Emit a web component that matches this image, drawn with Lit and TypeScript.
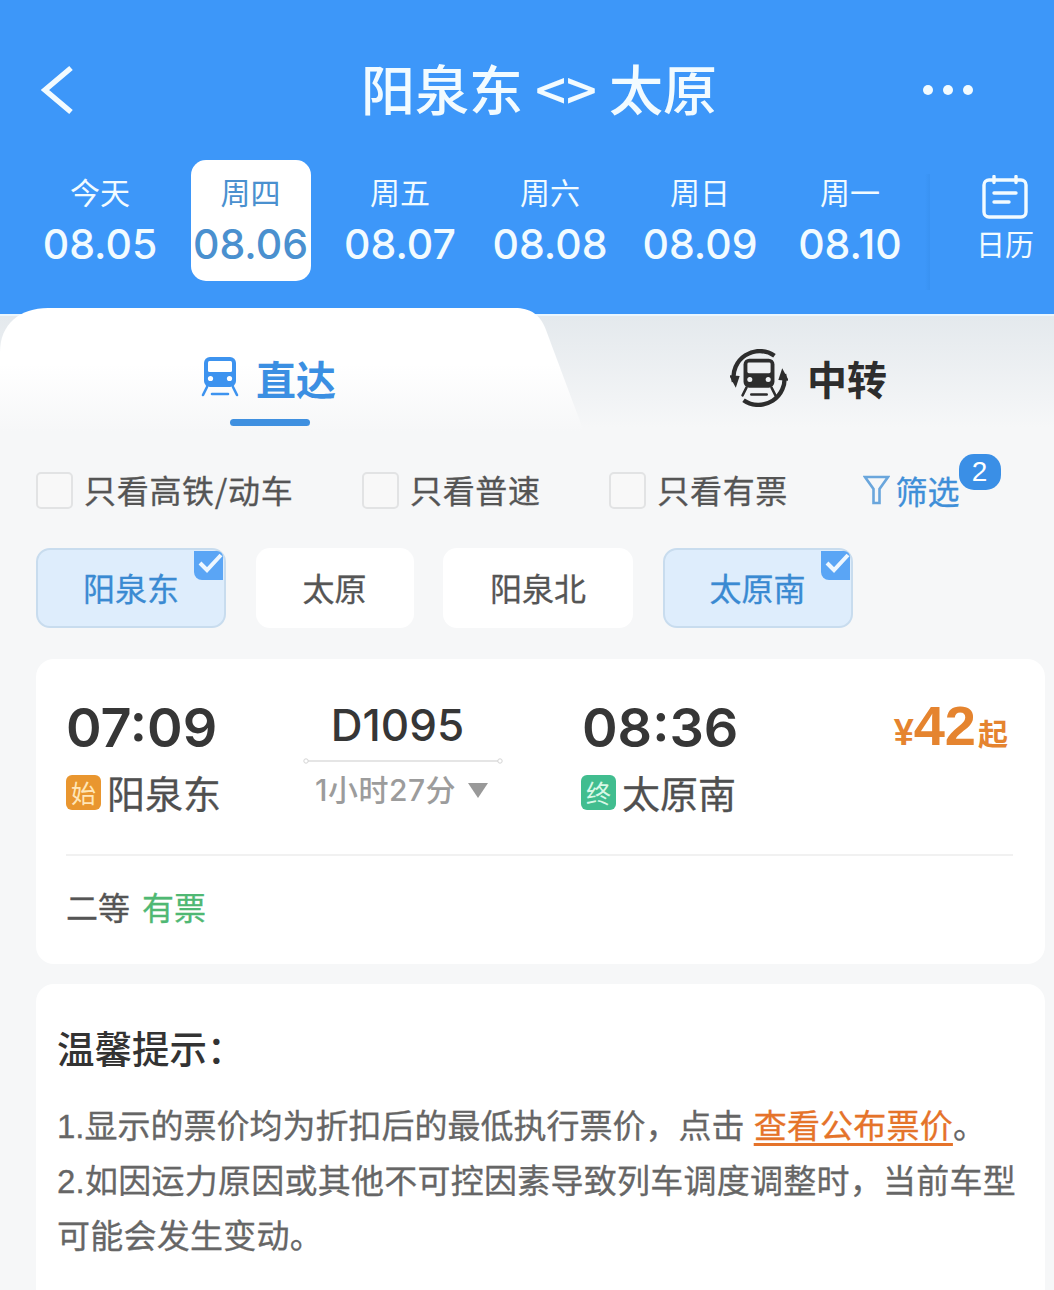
import { LitElement, html, css, svg } from "lit";
import { customElement } from "lit/decorators.js";

const dates = [
  { label: "今天", date: "08.05" },
  { label: "周四", date: "08.06", active: true },
  { label: "周五", date: "08.07" },
  { label: "周六", date: "08.08" },
  { label: "周日", date: "08.09" },
  { label: "周一", date: "08.10" },
];

const checks = ["只看高铁/动车", "只看普速", "只看有票"];

const stations = [
  { name: "阳泉东", on: true },
  { name: "太原" },
  { name: "阳泉北" },
  { name: "太原南", on: true },
];

// same train front is used on both tabs, only the colours differ
const train = (color: string, win: string) => svg`
  <rect x="14" y="9" width="32" height="30" rx="6" fill="${color}" />
  <rect x="18" y="13" width="24" height="11" rx="1.5" fill="${win}" />
  <circle cx="20.5" cy="30.5" r="2.6" fill="${win}" />
  <circle cx="39.5" cy="30.5" r="2.6" fill="${win}" />
  <path d="M17 39l-4 8M43 39l4 8M22 46h16" stroke="${color}" stroke-width="2.6" stroke-linecap="round" fill="none" />
`;

@customElement("app-root")
export class AppRoot extends LitElement {
  static styles = css`
    :host {
      display: block;
      width: 1054px;
      height: 1290px;
      overflow: hidden;
      background: #f6f7f8;
      font-family: "Liberation Sans", "Noto Sans CJK SC", sans-serif;
      color: #555;
    }

    /* header */
    .head {
      height: 314px;
      box-sizing: border-box;
      background: #3d97f9;
      color: #f2fbff;
      padding-top: 55px;
    }
    .nav {
      display: flex;
      align-items: center;
      justify-content: space-between;
      height: 70px;
      padding: 0 81px 0 40px;
    }
    .nav svg {
      display: block;
    }
    .title {
      font-family: "Noto Sans CJK SC", sans-serif;
      font-size: 54px;
      font-weight: 500;
      line-height: 70px;
      margin: -4px 0 0 81px;
      white-space: pre;
    }
    .days {
      display: flex;
      align-items: flex-start;
      margin-top: 35px;
      padding-left: 25px;
    }
    .day {
      width: 150px;
      height: 121px;
      display: flex;
      flex-direction: column;
      align-items: center;
      flex: none;
    }
    .day .lab {
      font-family: "Noto Sans CJK SC", sans-serif;
      font-size: 30px;
      line-height: 42px;
      margin-top: 10px;
    }
    .day .num {
      font-family: Inter, sans-serif;
      font-weight: 500;
      font-size: 41px;
      line-height: 48px;
      margin-top: 8px;
    }
    .day.on {
      width: 120px;
      margin: 0 14px 0 16px;
      background: #fff;
      border-radius: 15px;
      color: #4a90cf;
    }
    .day.on span {
      margin-right: 1px;
    }
    .cal {
      flex: none;
      width: 160px;
      height: 121px;
      position: relative;
      display: flex;
      flex-direction: column;
      align-items: center;
      padding-top: 15px;
      box-sizing: border-box;
    }
    .cal::before {
      content: "";
      position: absolute;
      left: 0;
      top: 14px;
      width: 5px;
      height: 116px;
      background: linear-gradient(90deg, #3d97f9, #3992f2);
    }
    .cal span {
      font-family: "Noto Sans CJK SC", sans-serif;
      font-size: 29px;
      line-height: 40px;
      margin-top: 4px;
    }

    /* tabs */
    .tabs {
      position: relative;
      height: 129px;
      display: grid;
      grid-template-columns: 540px 1fr;
      background: linear-gradient(#e4e9ed, #f6f7f8 88%);
      border-top: 2px solid #eaf6fe;
      box-sizing: border-box;
    }
    .tabshape {
      position: absolute;
      left: 0;
      top: -8px;
      display: block;
    }
    .tab {
      position: relative;
      display: flex;
      align-items: center;
      font-family: "Noto Sans CJK SC", sans-serif;
      font-size: 40px;
      font-weight: 700;
      height: 124px;
    }
    .tab.direct {
      color: #3b8fe2;
      padding-left: 190px;
    }
    .tab.direct svg {
      margin-right: 6px;
    }
    .tab.direct::after {
      content: "";
      position: absolute;
      left: 230px;
      top: 103px;
      width: 80px;
      height: 7px;
      border-radius: 4px;
      background: #3f90e0;
    }
    .tab.transfer {
      color: #2d2d2d;
      padding-left: 190px;
      gap: 19px;
    }

    /* filter row */
    .filters {
      display: flex;
      align-items: center;
      gap: 68.5px;
      padding: 0 36px;
      margin-top: 27px;
      height: 40px;
    }
    .chk {
      display: flex;
      align-items: center;
      gap: 11px;
      font-family: "Noto Sans CJK SC", sans-serif;
      font-size: 32px;
      letter-spacing: 0.7px;
      color: #555;
      white-space: nowrap;
      -webkit-text-stroke: 0.3px currentColor;
    }
    .chk span:last-child {
      margin-bottom: 3px;
    }
    .box {
      width: 37px;
      height: 37px;
      box-sizing: border-box;
      border: 2px solid #e2e3e4;
      border-radius: 5px;
      background: #f8f8f8;
    }
    .filter {
      position: relative;
      display: flex;
      align-items: center;
      gap: 6px;
      margin-left: 6px;
      font-family: "Noto Sans CJK SC", sans-serif;
      font-size: 32px;
      color: #3f8fd8;
      -webkit-text-stroke: 0.3px currentColor;
    }
    .badge {
      position: absolute;
      left: 96px;
      top: -13px;
      width: 42px;
      height: 36px;
      border-radius: 15px;
      background: #3a8fe6;
      color: #fff;
      font-family: "Liberation Sans", sans-serif;
      font-size: 28px;
      line-height: 36px;
      text-align: center;
      -webkit-text-stroke: 0;
    }

    /* station chips */
    .chips {
      display: flex;
      gap: 29.5px;
      padding: 0 36px;
      margin-top: 38px;
    }
    .chip {
      position: relative;
      height: 80px;
      padding: 0 47px 3px;
      box-sizing: border-box;
      display: flex;
      align-items: center;
      background: #fff;
      border-radius: 14px;
      font-family: "Noto Sans CJK SC", sans-serif;
      font-size: 32px;
      color: #555;
      -webkit-text-stroke: 0.3px currentColor;
    }
    .chip.on {
      background: #deedfc;
      border: 2px solid #c8dcee;
      color: #3a8ad2;
      padding: 0 45px 3px;
    }
    .tick {
      position: absolute;
      right: 1px;
      top: 1px;
      width: 29px;
      height: 29px;
      background: #5aa5f5;
      border-radius: 0 6px 0 8px;
      display: block;
    }

    /* cards */
    .card {
      margin: 31px 9px 0 36px;
      background: #fff;
      border-radius: 18px;
    }
    .ticket {
      height: 305px;
      box-sizing: border-box;
      padding: 0 32px 0 30px;
    }
    .route {
      display: grid;
      grid-template-columns: 210px 300px 1fr auto;
      height: 197px;
      border-bottom: 2px solid #f1f1f1;
      box-sizing: border-box;
    }
    .stop {
      display: flex;
      flex-direction: column;
      padding-top: 38px;
    }
    .time {
      font-family: Inter, sans-serif;
      font-weight: 600;
      font-size: 54px;
      line-height: 62px;
      color: #363636;
    }
    .place {
      display: flex;
      align-items: center;
      gap: 6px;
      font-family: "Noto Sans CJK SC", sans-serif;
      font-size: 38px;
      line-height: 50px;
      color: #505050;
      margin-top: 8px;
      -webkit-text-stroke: 0.3px currentColor;
    }
    .tag {
      width: 35px;
      height: 35px;
      border-radius: 6px;
      font-size: 25px;
      line-height: 35px;
      text-align: center;
      -webkit-text-stroke: 0;
    }
    .tag.start {
      background: #e9962f;
      color: #ffe6b8;
    }
    .tag.end {
      background: #41bd8f;
      color: #d8f8e6;
    }
    .arr {
      padding-left: 5px;
    }
    .arr .time {
      margin-left: 1px;
    }
    .mid {
      display: flex;
      flex-direction: column;
      align-items: center;
      width: 200px;
      margin-left: 27px;
      padding-top: 39px;
    }
    .code {
      font-family: Inter, sans-serif;
      font-weight: 500;
      font-size: 44px;
      line-height: 54px;
      color: #363636;
      margin-left: -11px;
    }
    .line {
      display: block;
      margin-top: 6px;
    }
    .dur {
      display: flex;
      align-items: center;
      gap: 12px;
      font-family: Inter, "Noto Sans CJK SC", sans-serif;
      font-size: 30px;
      font-weight: 500;
      line-height: 42px;
      letter-spacing: 0.5px;
      color: #9c9c9c;
      margin-top: 5px;
      margin-right: 3px;
    }
    .tri {
      width: 0;
      height: 0;
      border-left: 10px solid transparent;
      border-right: 10px solid transparent;
      border-top: 15px solid #999;
    }
    .price {
      display: flex;
      align-items: baseline;
      padding: 34px 5px 0 0;
      color: #e5842f;
      font-weight: 700;
      height: 60px;
    }
    .price .yen {
      font-size: 36px;
    }
    .price .big {
      font-size: 56px;
    }
    .price .qi {
      font-family: "Noto Sans CJK SC", sans-serif;
      font-size: 30px;
      margin-left: 2px;
    }
    .seat {
      display: flex;
      gap: 12px;
      margin-top: 25px;
      font-family: "Noto Sans CJK SC", sans-serif;
      font-size: 32px;
      line-height: 50px;
      color: #555;
      -webkit-text-stroke: 0.3px currentColor;
    }
    .seat em {
      font-style: normal;
      color: #4fb873;
    }
    .tips {
      margin-top: 20px;
      padding: 35px 20px 0 21px;
      height: 340px;
      box-sizing: border-box;
    }
    .tips h3 {
      margin: 0 0 24px;
      font-family: "Noto Sans CJK SC", sans-serif;
      font-size: 37.5px;
      font-weight: 500;
      line-height: 56px;
      color: #333;
    }
    .tips p {
      margin: 0;
      font-family: "Liberation Sans", "Noto Sans CJK SC", sans-serif;
      font-size: 33px;
      line-height: 55px;
      color: #666;
      -webkit-text-stroke: 0.3px currentColor;
    }
    .tips p.wide {
      letter-spacing: 0.25px;
    }
    .tips a {
      color: #e5732a;
      letter-spacing: 0.2px;
      text-decoration: underline;
      text-underline-offset: 5px;
    }
  `;

  render() {
    return html`
      <div class="head">
        <div class="nav">
          <svg width="34" height="50" viewBox="0 0 34 50">
            <path d="M31 3 5 25l26 22" fill="none" stroke="#f2fbff" stroke-width="5.5" />
          </svg>
          <div class="title">阳泉东 &lt;&gt; 太原</div>
          <svg width="50" height="12" viewBox="0 0 50 12" fill="#f2fbff">
            <circle cx="5" cy="6" r="5" />
            <circle cx="25" cy="6" r="5" />
            <circle cx="45" cy="6" r="5" />
          </svg>
        </div>
        <div class="days">
          ${dates.map(
            (d) => html`
              <div class="day ${d.active ? "on" : ""}">
                <span class="lab">${d.label}</span>
                <span class="num">${d.date}</span>
              </div>
            `
          )}
          <div class="cal">
            <svg width="46" height="44" viewBox="0 0 46 44" fill="none" stroke="#f2fbff" stroke-width="3.4" stroke-linecap="round">
              <rect x="2" y="5" width="42" height="37" rx="5" />
              <path d="M12 1.5v6M34 1.5v6M12 18h22M12 27h15" />
            </svg>
            <span>日历</span>
          </div>
        </div>
      </div>

      <div class="tabs">
        <svg class="tabshape" width="600" height="124" viewBox="0 0 600 124">
          <defs>
            <linearGradient id="fade" x1="0" y1="0" x2="0" y2="1">
              <stop offset="0.45" stop-color="#ffffff" />
              <stop offset="1" stop-color="#f6f7f8" />
            </linearGradient>
          </defs>
          <path d="M0 44C0 16 20 0 48 0H515C530 0 540 6 546 22L584 124H0Z" fill="url(#fade)" />
        </svg>
        <div class="tab direct">
          <svg width="60" height="60" viewBox="0 0 60 60">${train("#3d93ef", "#fff")}</svg>
          <span>直达</span>
        </div>
        <div class="tab transfer">
          <svg width="58" height="58" viewBox="0 0 60 60" fill="none">
            <g transform="translate(0 1)">${train("#2d2d2d", "#eef0f2")}</g>
            <path d="M4 34A27 27 0 0 1 46 7M56 26A27 27 0 0 1 14 53" stroke="#2d2d2d" stroke-width="4.5" />
            <path d="M-1 27 10 28 6 40ZM61 33 50 32 54 20Z" fill="#2d2d2d" />
          </svg>
          <span>中转</span>
        </div>
      </div>

      <div class="filters">
        ${checks.map(
          (c) => html`<label class="chk"><span class="box"></span><span>${c}</span></label>`
        )}
        <div class="filter">
          <svg width="27" height="30" viewBox="0 0 27 30" fill="none" stroke="#6aa6dc" stroke-width="2.6">
            <path d="M2 2h23L16.5 14v14h-6V14Z" />
          </svg>
          筛选
          <span class="badge">2</span>
        </div>
      </div>

      <div class="chips">
        ${stations.map(
          (s) => html`
            <div class="chip ${s.on ? "on" : ""}">
              ${s.name}
              ${s.on
                ? html`<svg class="tick" viewBox="0 0 29 29">
                    <path d="M6 12l7 7L27 4" fill="none" stroke="#eef7ff" stroke-width="4" />
                  </svg>`
                : ""}
            </div>
          `
        )}
      </div>

      <div class="card ticket">
        <div class="route">
          <div class="stop">
            <div class="time">07:09</div>
            <div class="place"><span class="tag start">始</span>阳泉东</div>
          </div>
          <div class="mid">
            <div class="code">D1095</div>
            <svg class="line" width="200" height="6" viewBox="0 0 200 6">
              <path d="M3 3h194" stroke="#dcdcdc" stroke-width="1.5" />
              <circle cx="3" cy="3" r="2.2" fill="#fff" stroke="#d4d4d4" />
              <circle cx="197" cy="3" r="2.2" fill="#fff" stroke="#d4d4d4" />
            </svg>
            <div class="dur"><span>1小时27分</span><i class="tri"></i></div>
          </div>
          <div class="stop arr">
            <div class="time">08:36</div>
            <div class="place"><span class="tag end">终</span>太原南</div>
          </div>
          <div class="price">
            <span class="yen">¥</span><span class="big">42</span><span class="qi">起</span>
          </div>
        </div>
        <div class="seat">二等 <em>有票</em></div>
      </div>

      <div class="card tips">
        <h3>温馨提示：</h3>
        <p>1.显示的票价均为折扣后的最低执行票价，点击 <a>查看公布票价</a>。</p>
        <p class="wide">2.如因运力原因或其他不可控因素导致列车调度调整时，当前车型可能会发生变动。</p>
      </div>
    `;
  }
}
